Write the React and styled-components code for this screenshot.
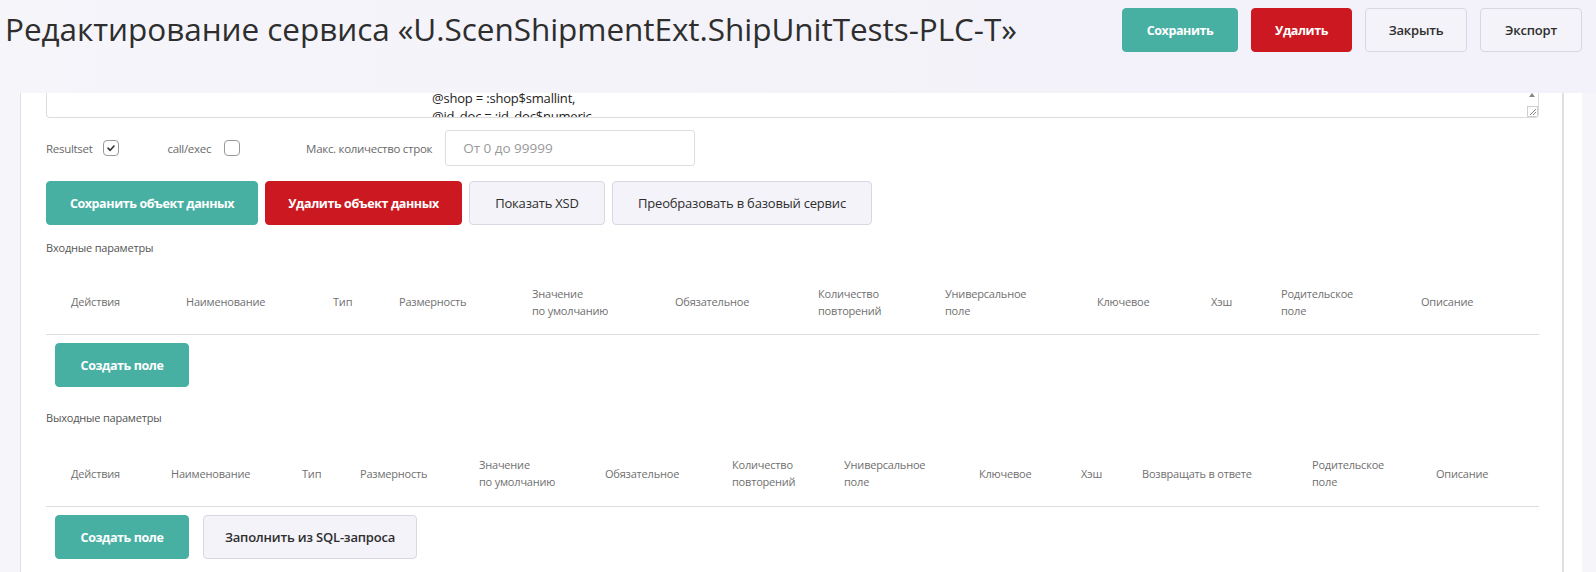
import React from "react";
import styled, { createGlobalStyle } from "styled-components";

const Global = createGlobalStyle`
  html, body {
    margin: 0;
    padding: 0;
    background: #f6f6fa;
    font-family: "Open Sans", "Liberation Sans", sans-serif;
    color: #333;
  }
`;

const Page = styled.div`
  width: 1596px;
  height: 572px;
  overflow: hidden;
  display: flex;
  flex-direction: column;
`;

const Header = styled.div`
  height: 93px;
  flex-shrink: 0;
  box-sizing: border-box;
  padding: 8px 14px 0 5px;
  display: flex;
  align-items: flex-start;
  justify-content: space-between;
  background: linear-gradient(90deg, #f5f5fa 0%, #f3f2f9 60%, #f3f1fa 100%);
`;

const Title = styled.h1`
  margin: -1px 0 0;
  font-size: 31.5px;
  font-weight: 400;
  line-height: 44px;
  letter-spacing: -0.05px;
  color: #2e2e2e;
  white-space: nowrap;
`;

const Actions = styled.div`
  display: flex;
  gap: 13px;
`;

const Button = styled.button`
  width: ${(p) => p.w}px;
  height: 44px;
  box-sizing: border-box;
  border-radius: 4px;
  font-family: "Open Sans", "Liberation Sans", sans-serif;
  font-size: 12.5px;
  letter-spacing: -0.4px;
  cursor: pointer;
  padding: 0;
  ${(p) =>
    p.kind === "teal"
      ? `background: #47b0a3; border: 1px solid #47b0a3; color: #fff; font-weight: 700;`
      : p.kind === "red"
      ? `background: #cc1820; border: 1px solid #cc1820; color: #fff; font-weight: 700;`
      : `background: #f4f3f9; border: 1px solid #d9d8e2; color: #2e2e2e;
         font-weight: ${p.bold ? 600 : 400}; font-size: 13px; letter-spacing: -0.2px;`}
`;

const Body = styled.div`
  flex: 1;
  display: flex;
  padding-left: 20px;
`;

const Card = styled.div`
  width: 1562px;
  background: #fff;
  border-left: 1px solid #e2e2e6;
  box-sizing: border-box;
  display: flex;
`;

const Content = styled.div`
  width: 1543px;
  border-right: 2px solid #e0e0e4;
  box-sizing: border-box;
  padding: 0 23px 0 25px;
  display: flex;
  flex-direction: column;
`;

const Textarea = styled.div`
  height: 25px;
  flex-shrink: 0;
  box-sizing: border-box;
  border: 1px solid #dcdcdc;
  border-top: none;
  border-radius: 0 0 4px 4px;
  overflow: hidden;
  display: flex;
`;

const Code = styled.div`
  flex: 1;
  margin-top: -4px;
  padding-left: 385px;
  font-size: 13px;
  line-height: 18px;
  letter-spacing: -0.2px;
  color: #222;
`;

const ScrollCol = styled.div`
  width: 12px;
  display: flex;
  flex-direction: column;
  justify-content: space-between;
  align-items: center;
`;

const Options = styled.div`
  margin-top: 12px;
  height: 36px;
  display: flex;
  align-items: center;
`;

const Label = styled.span`
  font-size: 11.5px;
  color: #6a6a6a;
  margin-right: ${(p) => p.mr || 0}px;
  letter-spacing: -0.3px;
`;

const Check = styled.span`
  width: 16px;
  height: 16px;
  box-sizing: border-box;
  border: 1px solid #9a9a9a;
  border-radius: 4px;
  display: inline-flex;
  align-items: center;
  justify-content: center;
  margin-right: ${(p) => p.mr || 0}px;
`;

const NumInput = styled.div`
  width: 250px;
  height: 36px;
  box-sizing: border-box;
  border: 1px solid #dedede;
  border-radius: 3px;
  padding-left: 17px;
  display: flex;
  align-items: center;
  font-size: 13.5px;
  color: #9a9a9a;
`;

const Row = styled.div`
  margin-top: ${(p) => p.mt || 0}px;
  padding-left: ${(p) => p.pl || 0}px;
  display: flex;
  gap: ${(p) => p.gap || 7}px;
`;

const Section = styled.div`
  margin-top: ${(p) => p.mt}px;
  font-size: 11px;
  line-height: 16px;
  color: #555;
  letter-spacing: -0.2px;
`;

const HeadRow = styled.div`
  margin-top: ${(p) => p.mt}px;
  height: ${(p) => p.h}px;
  flex-shrink: 0;
  box-sizing: border-box;
  border-bottom: 1px solid #dedede;
  padding: 0 0 0 25px;
  display: grid;
  grid-template-columns: ${(p) => p.cols};
  align-items: center;
`;

const HeadCell = styled.div`
  font-size: 11px;
  line-height: 17px;
  color: #707070;
  letter-spacing: -0.2px;
  white-space: nowrap;
`;

const inCols = [
  ["Действия", 115],
  ["Наименование", 147],
  ["Тип", 66],
  ["Размерность", 133],
  ["Значение|по умолчанию", 143],
  ["Обязательное", 143],
  ["Количество|повторений", 127],
  ["Универсальное|поле", 152],
  ["Ключевое", 114],
  ["Хэш", 70],
  ["Родительское|поле", 140],
  ["Описание", 119],
];

const outCols = [
  ["Действия", 100],
  ["Наименование", 131],
  ["Тип", 58],
  ["Размерность", 119],
  ["Значение|по умолчанию", 126],
  ["Обязательное", 127],
  ["Количество|повторений", 112],
  ["Универсальное|поле", 135],
  ["Ключевое", 102],
  ["Хэш", 61],
  ["Возвращать в ответе", 170],
  ["Родительское|поле", 124],
  ["Описание", 104],
];

const TableHead = ({ cols, mt, h }) => (
  <HeadRow mt={mt} h={h} cols={cols.map((c) => c[1] + "px").join(" ")}>
    {cols.map(([t]) => (
      <HeadCell key={t}>
        {t.split("|").map((l, i) => (
          <div key={i}>{l}</div>
        ))}
      </HeadCell>
    ))}
  </HeadRow>
);

const Tick = () => (
  <svg width="10" height="10" viewBox="0 0 10 10">
    <path d="M2 5.2 L4.2 7.3 L8 3" fill="none" stroke="#333" strokeWidth="1.6" strokeLinecap="round" strokeLinejoin="round" />
  </svg>
);

const App = () => (
  <Page>
    <Global />
    <Header>
      <Title>Редактирование сервиса «U.ScenShipmentExt.ShipUnitTests-PLC-T»</Title>
      <Actions>
        <Button kind="teal" w={116}>Сохранить</Button>
        <Button kind="red" w={101}>Удалить</Button>
        <Button w={102} bold>Закрыть</Button>
        <Button w={102} bold>Экспорт</Button>
      </Actions>
    </Header>
    <Body>
      <Card>
        <Content>
          <Textarea>
            <Code>
              <div>@shop = :shop$smallint,</div>
              <div>@id_doc = :id_doc$numeric,</div>
            </Code>
            <ScrollCol>
              <svg width="6" height="4" viewBox="0 0 6 4">
                <path d="M0 4 L3 0 L6 4 Z" fill="#888" />
              </svg>
              <svg width="11" height="11" viewBox="0 0 11 11">
                <rect x="0.5" y="0.5" width="10" height="10" fill="#fff" stroke="#cfcfcf" />
                <path d="M9 3 L3 9 M9 6 L6 9" stroke="#777" strokeWidth="0.9" />
              </svg>
            </ScrollCol>
          </Textarea>
          <Options>
            <Label mr={11}>Resultset</Label>
            <Check mr={48}>
              <Tick />
            </Check>
            <Label mr={13}>call/exec</Label>
            <Check mr={66} />
            <Label mr={13}>Макс. количество строк</Label>
            <NumInput>От 0 до 99999</NumInput>
          </Options>
          <Row mt={15}>
            <Button kind="teal" w={212}>Сохранить объект данных</Button>
            <Button kind="red" w={197}>Удалить объект данных</Button>
            <Button w={136}>Показать XSD</Button>
            <Button w={260}>Преобразовать в базовый сервис</Button>
          </Row>
          <Section mt={15}>Входные параметры</Section>
          <TableHead mt={13} h={66} cols={inCols} />
          <Row mt={8} pl={9}>
            <Button kind="teal" w={134}>Создать поле</Button>
          </Row>
          <Section mt={23}>Выходные параметры</Section>
          <TableHead mt={14} h={67} cols={outCols} />
          <Row mt={8} pl={9} gap={14}>
            <Button kind="teal" w={134}>Создать поле</Button>
            <Button w={214} bold>Заполнить из SQL-запроса</Button>
          </Row>
        </Content>
      </Card>
    </Body>
  </Page>
);

export default App;
